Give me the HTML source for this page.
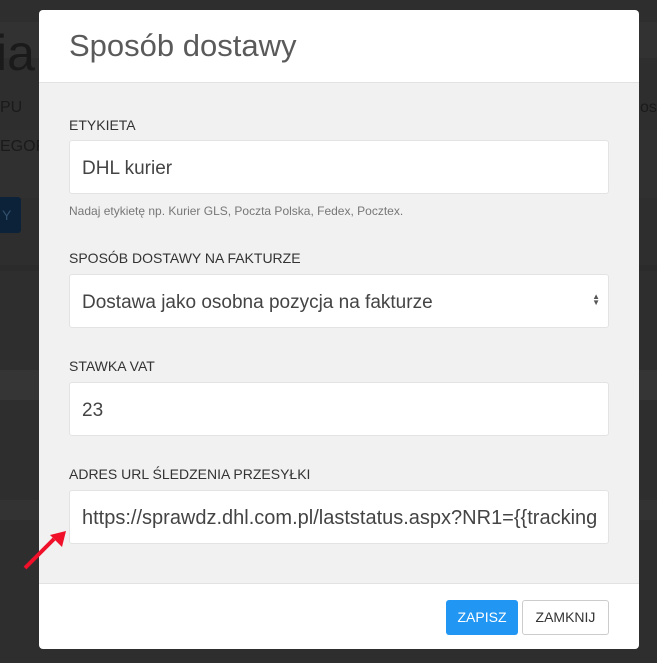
<!DOCTYPE html>
<html><head><meta charset="utf-8"><style>
*{box-sizing:border-box;margin:0;padding:0}
body{width:657px;height:663px;overflow:hidden;background:#2e2e2e;font-family:"Liberation Sans",sans-serif;position:relative}
.band{position:absolute;left:0;width:657px;background:#353535}
.bg{position:absolute;color:#1a1a1a;font-weight:300}
.modal{position:absolute;left:39px;top:10px;width:600px;height:639px;background:#fff;border-radius:4px;overflow:hidden}
.hd{height:73px;border-bottom:1px solid #e2e2e2;padding:18px 30px 0}
.hd h1{font-weight:300;font-size:31px;color:#5a5a5a;letter-spacing:0}
.bd{background:#f1f1f1;height:500px;padding:0 30px;position:relative}
.lbl{position:absolute;left:30px;font-size:14px;color:#333}
.inp{position:absolute;left:30px;width:540px;height:54px;background:#fff;border:1px solid #e3e3e3;border-radius:3px;font-size:19px;color:#444;padding:17px 12px 0;white-space:nowrap;overflow:hidden;font-weight:300}
.help{position:absolute;left:30px;font-size:12px;color:#777}
.ft{position:absolute;top:573px;left:0;width:600px;height:66px;border-top:1px solid #e2e2e2}
.btn{position:absolute;top:16px;height:35px;font-size:14px;border-radius:3px;text-align:center;line-height:35px}
</style></head><body>
<div class="band" style="top:22px;height:36px;background:#323232"></div>
<div class="band" style="top:130px;height:68px;background:#303030"></div>
<div class="band" style="top:265px;height:6px;background:#2b2b2b"></div>
<div class="band" style="top:370px;height:30px;background:#353535"></div>
<div class="band" style="top:500px;height:20px;background:#333"></div>
<div class="bg" style="left:-4px;top:24px;font-size:50px">ia</div>
<div class="bg" style="left:0;top:99px;font-size:16px;font-weight:400">PU</div>
<div class="bg" style="left:0;top:138px;font-size:16px;font-weight:400">EGORI</div>
<div style="position:absolute;left:0;top:197px;width:21px;height:36px;background:#0c2238;border-radius:0 3px 3px 0;color:#33506d;font-size:14px;line-height:36px;padding-left:2px">Y</div>
<div class="bg" style="left:640px;top:99px;font-size:16px;font-weight:400">os</div>
<div class="modal">
<div class="hd"><h1>Sposób dostawy</h1></div>
<div class="bd">
<div class="lbl" style="top:34px">ETYKIETA</div>
<div class="inp" style="top:57px">DHL kurier</div>
<div class="help" style="top:121px">Nadaj etykietę np. Kurier GLS, Poczta Polska, Fedex, Pocztex.</div>
<div class="lbl" style="top:167px">SPOSÓB DOSTAWY NA FAKTURZE</div>
<div class="inp" style="top:191px">Dostawa jako osobna pozycja na fakturze<span style="position:absolute;right:8px;top:19px;font-size:8px;line-height:6px;color:#555">▲<br>▼</span></div>
<div class="lbl" style="top:275px">STAWKA VAT</div>
<div class="inp" style="top:299px">23</div>
<div class="lbl" style="top:383px">ADRES URL ŚLEDZENIA PRZESYŁKI</div>
<div class="inp" style="top:407px;font-size:20px;padding-top:16px"><div style="width:514px;overflow:hidden">https://sprawdz.dhl.com.pl/laststatus.aspx?NR1={{tracking}}</div></div>
</div>
<div class="ft">
<div class="btn" style="left:407px;width:72px;background:#2196f3;color:#fff">ZAPISZ</div>
<div class="btn" style="left:483px;width:87px;background:#fff;border:1px solid #ccc;color:#333;line-height:33px">ZAMKNIJ</div>
</div>
</div>
<svg style="position:absolute;left:20px;top:525px" width="50" height="50"><line x1="5" y1="43" x2="34" y2="14" stroke="#f0102a" stroke-width="4"/><polygon points="46,6 30,10 42,22" fill="#f0102a"/></svg>
</body></html>
